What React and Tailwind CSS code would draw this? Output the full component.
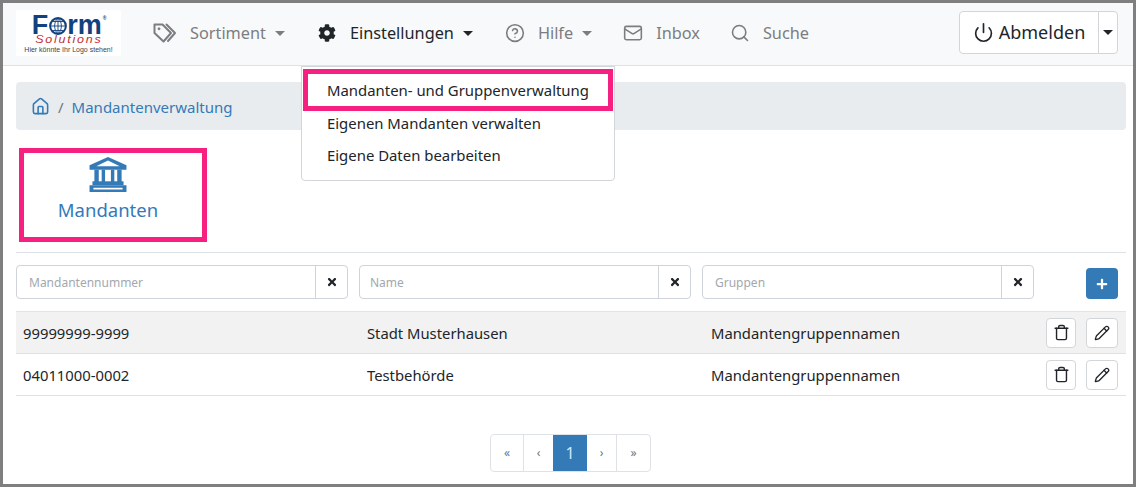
import React from "react";
import { FaCog, FaTimes, FaPlus } from "react-icons/fa";
import { CircleHelp, Mail, Search, Power, Trash, Pencil, House } from "lucide-react";

const Caret = ({ className = "" }) => (
  <span
    className={`inline-block w-0 h-0 border-x-[5px] border-x-transparent border-t-[5px] ${className}`}
  />
);

const TagsIcon = () => (
  <svg width="24" height="22" viewBox="0 0 24 22" fill="none" stroke="currentColor" strokeWidth="2" strokeLinejoin="round" className="mr-[13px]">
    <path d="M1.5 2.5h8l8.5 8.5-7.5 8.5-9-8.5z" />
    <circle cx="6" cy="6.8" r="1" fill="currentColor" strokeWidth="1" />
    <path d="M13.5 2.5l8.5 8.5-7 8" strokeLinecap="round" />
  </svg>
);

const BankIcon = () => (
  <svg width="38" height="35" viewBox="0 0 38 36" fill="currentColor" className="mt-[4px]">
    <path fillRule="evenodd" d="M19 0L38 8.5V13H0V8.5zM19 3.500L7 9.500H31z" />
    <path d="M5 13h4.500v13H5zM12.500 13H16v13h-3.500zM22 13h3.500v13H22zM28.500 13H33v13h-4.500z" />
    <path d="M3 25h32v4H3z" />
    <path fillRule="evenodd" d="M0 29h38v7H0zM4 31.500v2h30v-2z" />
  </svg>
);

const NavItem = ({ icon, label, caret, active, className = "" }) => (
  <div
    className={`flex items-center ${active ? "text-[#212529]" : "text-[#7b7e81]"} ${className}`}
  >
    {icon}
    <span className="text-[16.300px] leading-none mt-[1px]">{label}</span>
    {caret && (
      <Caret
        className={`ml-[9px] ${active ? "border-t-[#212529]" : "border-t-[#7b7e81]"}`}
      />
    )}
  </div>
);

const Logo = () => (
  <div className="w-[105px] h-[46px] bg-white flex flex-col items-center font-['Liberation_Sans',sans-serif] overflow-hidden">
    <div className="flex items-center h-[20px] mt-[5px] text-[#12417f] font-bold text-[27px] leading-[20px] ml-[1px]">
      <span>F</span>
      <svg width="18" height="18" viewBox="0 0 16 16" className="mx-[0.5px] mt-[1px]">
        <circle cx="8" cy="8" r="7" fill="#fff" stroke="#12417f" strokeWidth="1.8" />
        <path
          d="M1 8h14M8 1v14M3 4h10M3 12h10M8 1c-4 3-4 11 0 14M8 1c4 3 4 11 0 14"
          fill="none"
          stroke="#12417f"
          strokeWidth="0.8"
        />
      </svg>
      <span>rm</span>
      <span className="text-[5px] leading-[6px] self-start ml-[1px]">®</span>
    </div>
    <div className="text-[#c5303c] italic text-[10px] leading-[10px] tracking-[1.4px] scale-x-125">
      Solutions
    </div>
    <div className="text-[#444] text-[7px] leading-[8px] mt-[1px] whitespace-nowrap">
      Hier könnte Ihr Logo stehen!
    </div>
  </div>
);

const FilterInput = ({ placeholder, className = "" }) => (
  <div className={`flex h-[34px] border border-[#ced4da] rounded-[4px] w-[332px] ${className}`}>
    <div className="flex-1 flex items-center pt-[2px] text-[12px] text-[#a2a8ae]">
      {placeholder}
    </div>
    <div className="w-[32px] border-l border-[#ced4da] flex items-center justify-center text-[#212529]">
      <FaTimes className="w-[10px] h-[12px]" />
    </div>
  </div>
);

const IconButton = ({ children, className = "" }) => (
  <div className={`h-[30px] bg-white border border-[#d3d6d9] rounded-[4px] flex items-center justify-center text-[#212529] ${className}`}>
    {children}
  </div>
);

const Row = ({ nr, name, group, striped }) => (
  <div
    className={`flex items-center h-[42px] border-b border-[#dee2e6] text-[14.800px] text-[#212529] ${striped ? "bg-[#f2f2f2]" : ""}`}
  >
    <div className="w-[351px] pl-[7px] pt-[2px]">{nr}</div>
    <div className="w-[344px] pt-[2px]">{name}</div>
    <div className="flex-1 pt-[2px]">{group}</div>
    <div className="flex gap-[10px] pr-2">
      <IconButton className="w-[30px]">
        <Trash size={17} strokeWidth={2} />
      </IconButton>
      <IconButton className="w-[32px]">
        <Pencil size={16} strokeWidth={2} />
      </IconButton>
    </div>
  </div>
);

const PageItem = ({ children, active, className = "" }) => (
  <div
    className={`h-[36px] flex items-center justify-center ${active ? "bg-[#337ab7] text-[#cfe9fb] text-[16px]" : "text-[#6c757d] text-[12px]"} ${className}`}
  >
    {children}
  </div>
);

export default function App() {
  return (
    <div className="relative w-[1136px] h-[487px] bg-[#7f7f7f] p-[3px] font-['Noto_Sans',sans-serif] overflow-hidden">
      <div className="relative bg-white h-[481px]">
        {/* navbar */}
        <div className="flex items-center h-[63px] bg-[#f8f9fa] border-b border-[#dee2e6] pl-[13px] pr-[15px] pb-[2px]">
          <Logo />
          <NavItem
            className="ml-[32px]"
            label="Sortiment"
            caret
            icon={<TagsIcon />}
          />
          <NavItem
            className="ml-[33px]"
            label="Einstellungen"
            caret
            active
            icon={<FaCog size={18} className="mr-[14px]" />}
          />
          <NavItem
            className="ml-[32px]"
            label="Hilfe"
            caret
            icon={<CircleHelp size={20} strokeWidth={1.9} className="mr-[13px]" />}
          />
          <NavItem
            className="ml-[31px]"
            label="Inbox"
            icon={<Mail size={20} strokeWidth={1.9} className="mr-[13px]" />}
          />
          <NavItem
            className="ml-[30px]"
            label="Suche"
            icon={<Search size={20} strokeWidth={1.9} className="mr-[13px]" />}
          />
          <div className="ml-auto -mt-[1px] flex h-[43px] border border-[#d3d6d9] rounded-[4px] bg-white text-[#212529]">
            <div className="w-[138px] flex items-center justify-center text-[18px]">
              <Power size={21} strokeWidth={1.9} className="mr-[5px]" />
              Abmelden
            </div>
            <div className="w-[19px] border-l border-[#d3d6d9] flex items-center justify-center">
              <Caret className="border-t-[#212529]" />
            </div>
          </div>
        </div>

        {/* page content */}
        <div className="pl-[13px] pr-[7px] pt-[16px]">
          <div className="flex items-center h-[48px] bg-[#e9ecef] rounded-[4px] pl-[15px] pt-[2px] text-[15px]">
            <House size={19} strokeWidth={2} className="text-[#337ab7] mb-[2px]" />
            <span className="mx-[8px] text-[#6c757d]">/</span>
            <span className="text-[#337ab7]">Mandantenverwaltung</span>
          </div>

          <div className="mt-[18px] ml-[3px] w-[188px] h-[94px] border-[5px] border-[#f5207f] flex flex-col items-center pr-[10px] text-[#337ab7]">
            <BankIcon />
            <span className="text-[18.500px] leading-none mt-[9px]">Mandanten</span>
          </div>

          <div className="mt-[10px] border-t border-[#dee2e6] pt-[12px] flex items-start">
            <FilterInput placeholder="Mandantennummer" className="pl-[12px]" />
            <FilterInput placeholder="Name" className="ml-[11px] pl-[10px]" />
            <FilterInput placeholder="Gruppen" className="ml-[11px] pl-[12px]" />
            <div className="ml-[52px] mt-[3px] w-[32px] h-[31px] rounded-[4px] bg-[#337ab7] text-white flex items-center justify-center">
              <FaPlus size={12} />
            </div>
          </div>

          <div className="mt-[12px] border-t border-[#e4e4e4]">
            <Row nr="99999999-9999" name="Stadt Musterhausen" group="Mandantengruppennamen" striped />
            <Row nr="04011000-0002" name="Testbehörde" group="Mandantengruppennamen" />
          </div>

          <div className="mt-[38px] flex justify-center pr-[1px]">
            <div className="flex w-[161px] border border-[#dee2e6] rounded-[4px] overflow-hidden">
              <PageItem className="w-[33px] border-r border-[#dee2e6]">«</PageItem>
              <PageItem className="w-[29px]">‹</PageItem>
              <PageItem active className="w-[34px]">1</PageItem>
              <PageItem className="w-[30px] border-r border-[#dee2e6]">›</PageItem>
              <PageItem className="flex-1">»</PageItem>
            </div>
          </div>
        </div>

        {/* open dropdown */}
        <div className="absolute left-[298px] top-[63px] w-[314px] h-[115px] bg-white border border-[#d3d6d9] rounded-b-[4px] text-[14.900px] text-[#212529]">
          <div className="h-[42px] mt-[2px] mx-[1px] w-[310px] border-[5px] border-[#f5207f] flex items-center pl-[19px] pt-[1px]">
            Mandanten- und Gruppenverwaltung
          </div>
          <div className="pl-[25px] -mt-[4px] leading-[32px]">Eigenen Mandanten verwalten</div>
          <div className="pl-[25px] leading-[32px]">Eigene Daten bearbeiten</div>
        </div>
      </div>
    </div>
  );
}
